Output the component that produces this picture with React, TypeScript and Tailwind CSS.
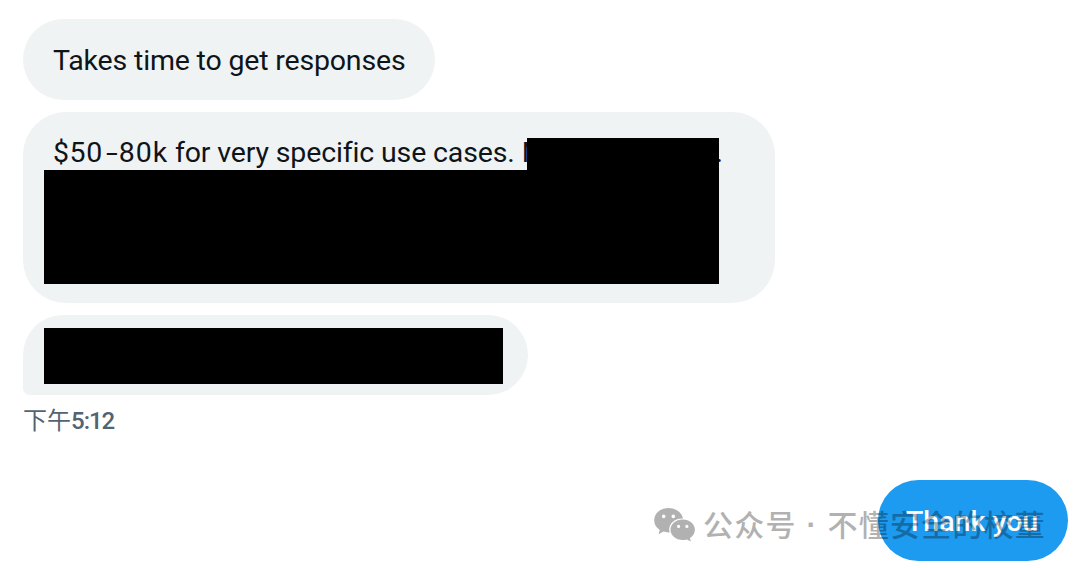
import clsx from 'clsx';
import type { ReactNode } from 'react';

type BubbleProps = {
  className?: string;
  children?: ReactNode;
};

function Bubble({ className, children }: BubbleProps) {
  return (
    <div
      className={clsx(
        'relative bg-[#eff3f4] px-[30px] text-[28.5px] leading-[38px] tracking-[-0.17px] whitespace-nowrap text-[#0f1419]',
        className
      )}
    >
      {children}
    </div>
  );
}

function WeChatIcon() {
  return (
    <svg width="42" height="34" viewBox="0 0 42 34" fill="currentColor">
      <path
        fillRule="evenodd"
        d="M14.5 0C6.500 0 .2 5.400.2 12.300c0 4 2.100 7.500 5.500 9.800L4.600 26.200l4.900-2.600c1.600.5 3.300.8 5 .8h1.200c-.3-1-.5-2-.5-3 0-6.200 5.900-11 12.800-11h1C27.800 4.400 21.700 0 14.500 0ZM9.700 6.600a1.800 1.800 0 1 1 0 3.600 1.800 1.800 0 0 1 0-3.600Zm9.600 0a1.800 1.800 0 1 1 0 3.600 1.800 1.800 0 0 1 0-3.600Z"
      />
      <path
        fillRule="evenodd"
        d="M28.700 11.500c-6.800 0-12.200 4.600-12.200 10.200S21.900 32 28.700 32c1.500 0 2.900-.2 4.200-.6l4 2.100-1-3.500c3.100-1.900 5-4.900 5-8.300 0-5.600-5.400-10.200-12.200-10.200Zm-4.100 5.300a1.600 1.600 0 1 1 0 3.200 1.600 1.600 0 0 1 0-3.200Zm8.300 0a1.600 1.600 0 1 1 0 3.200 1.600 1.600 0 0 1 0-3.200Z"
      />
    </svg>
  );
}

function Watermark() {
  return (
    <div className="absolute top-[502px] left-[654px] flex items-start text-black opacity-30">
      <div className="pt-[6px]">
        <WeChatIcon />
      </div>
      <div className="ml-[7px] flex font-['Noto_Sans_CJK_SC',sans-serif] text-[30px] leading-[42px] font-medium tracking-[1.2px] whitespace-nowrap">
        <span>公众号</span>
        <span className="w-[31px] pt-[2px] text-center font-['Liberation_Sans',sans-serif] font-bold">
          ·
        </span>
        <span>不懂安全的校董</span>
      </div>
    </div>
  );
}

export default function App() {
  return (
    <div className="relative flex h-[568px] w-[1080px] flex-col items-start overflow-hidden bg-white pt-[19px] pl-[23px] font-[Roboto,'Noto_Sans_CJK_SC',sans-serif]">
      <Bubble className="h-[81px] w-[412px] rounded-[41px] pt-[23px]">
        Takes time to get responses
      </Bubble>

      <Bubble className="mt-[12px] h-[191px] w-[752px] rounded-[43px] pt-[22px]">
        <span className="tracking-[0.6px]">$50</span>
        <span className="mr-[1px] ml-[3px] inline-block w-[12px] origin-left scale-x-150">-</span>
        <span className="tracking-[0.9px]">80k</span>
        <span className="tracking-[-0.14px]"> for very specific use cases. N</span>
        <span className="absolute top-[22px] left-[692.5px]">.</span>
        <div className="absolute top-[26px] left-[504px] h-[33px] w-[192px] bg-black" />
        <div className="absolute top-[58px] left-[21px] h-[114px] w-[675px] bg-black" />
      </Bubble>

      <Bubble className="mt-[12px] h-[80px] w-[505px] rounded-[41px] rounded-bl-[7px]">
        <div className="absolute top-[13px] left-[21px] h-[56px] w-[459px] bg-black" />
      </Bubble>

      <div className="mt-[9px] text-[24px] leading-[34px] text-[#536471]">
        <span>下午</span>
        <span className="font-medium tracking-[-1px]">5:12</span>
      </div>

      <div className="mt-[42px] mr-[12px] h-[81px] w-[190px] self-end rounded-[41px] bg-[#1d9bf0] pt-[23px] pl-[28px] text-[28.5px] leading-[38px] font-medium whitespace-nowrap text-white">
        Thank you
      </div>

      <Watermark />
    </div>
  );
}
